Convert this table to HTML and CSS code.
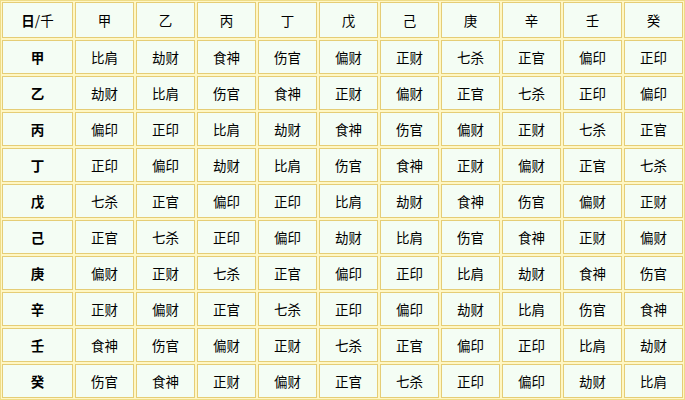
FILE: index.html
```html
<!DOCTYPE html>
<html lang="zh">
<head>
<meta charset="utf-8">
<link rel="stylesheet" href="styles.css">
</head>
<body>
<table class="grid">
<colgroup><col class="c0"><col class="c"><col class="c"><col class="c"><col class="c"><col class="c"><col class="c"><col class="c"><col class="c"><col class="c"><col class="c"></colgroup>
<tr class="head"><td><b>日</b>/千</td><td>甲</td><td>乙</td><td>丙</td><td>丁</td><td>戊</td><td>己</td><td>庚</td><td>辛</td><td>壬</td><td>癸</td></tr>
<tr><th>甲</th><td>比肩</td><td>劫财</td><td>食神</td><td>伤官</td><td>偏财</td><td>正财</td><td>七杀</td><td>正官</td><td>偏印</td><td>正印</td></tr>
<tr><th>乙</th><td>劫财</td><td>比肩</td><td>伤官</td><td>食神</td><td>正财</td><td>偏财</td><td>正官</td><td>七杀</td><td>正印</td><td>偏印</td></tr>
<tr><th>丙</th><td>偏印</td><td>正印</td><td>比肩</td><td>劫财</td><td>食神</td><td>伤官</td><td>偏财</td><td>正财</td><td>七杀</td><td>正官</td></tr>
<tr><th>丁</th><td>正印</td><td>偏印</td><td>劫财</td><td>比肩</td><td>伤官</td><td>食神</td><td>正财</td><td>偏财</td><td>正官</td><td>七杀</td></tr>
<tr><th>戊</th><td>七杀</td><td>正官</td><td>偏印</td><td>正印</td><td>比肩</td><td>劫财</td><td>食神</td><td>伤官</td><td>偏财</td><td>正财</td></tr>
<tr><th>己</th><td>正官</td><td>七杀</td><td>正印</td><td>偏印</td><td>劫财</td><td>比肩</td><td>伤官</td><td>食神</td><td>正财</td><td>偏财</td></tr>
<tr><th>庚</th><td>偏财</td><td>正财</td><td>七杀</td><td>正官</td><td>偏印</td><td>正印</td><td>比肩</td><td>劫财</td><td>食神</td><td>伤官</td></tr>
<tr><th>辛</th><td>正财</td><td>偏财</td><td>正官</td><td>七杀</td><td>正印</td><td>偏印</td><td>劫财</td><td>比肩</td><td>伤官</td><td>食神</td></tr>
<tr><th>壬</th><td>食神</td><td>伤官</td><td>偏财</td><td>正财</td><td>七杀</td><td>正官</td><td>偏印</td><td>正印</td><td>比肩</td><td>劫财</td></tr>
<tr><th>癸</th><td>伤官</td><td>食神</td><td>正财</td><td>偏财</td><td>正官</td><td>七杀</td><td>正印</td><td>偏印</td><td>劫财</td><td>比肩</td></tr>
</table>
</body>
</html>
```
FILE: styles.css
```css
html, body {
  margin: 0;
  padding: 0;
  background: #fff7c4;
}
.grid {
  width: 685px;
  height: 400px;
  table-layout: fixed;
  border-collapse: separate;
  border-spacing: 2px;
  background: #fff7c4;
  font-family: "Noto Sans CJK SC", "Noto Sans", sans-serif;
  font-size: 13.5px;
  color: #000;
  box-shadow: inset 0 0 0 1px #eedc88;
}
.c0 { width: 71px; }
.c { width: 59px; }
.grid td, .grid th {
  border: 1px solid #e5cd76;
  background: #f4fdf4;
  text-align: center;
  vertical-align: middle;
  padding: 0;
  height: 32px;
  font-weight: normal;
}
.grid th { font-weight: bold; }
.head td { height: 34px; }
```
